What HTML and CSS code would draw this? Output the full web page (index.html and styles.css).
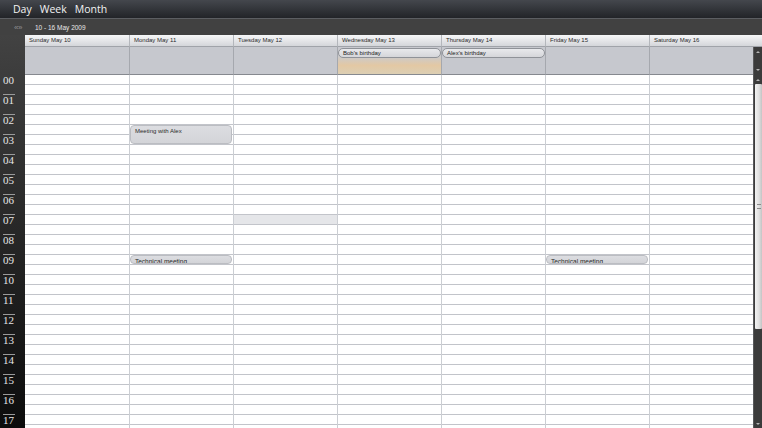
FILE: index.html
```html
<!DOCTYPE html>
<html>
<head>
<meta charset="utf-8">
<title>Week view</title>
<link rel="stylesheet" href="styles.css">
</head>
<body>
<div class="app">
  <div class="topbar"><span>Day</span><span>Week</span><span>Month</span></div>
  <div class="subbar"><span class="nav">«»</span><span class="range">10 - 16 May 2009</span></div>
  <div class="main">
    <div class="times">
      <div class="times-head"></div>
      <div class="hour first">00</div>
      <div class="hour">01</div>
      <div class="hour">02</div>
      <div class="hour">03</div>
      <div class="hour">04</div>
      <div class="hour">05</div>
      <div class="hour">06</div>
      <div class="hour">07</div>
      <div class="hour">08</div>
      <div class="hour">09</div>
      <div class="hour">10</div>
      <div class="hour">11</div>
      <div class="hour">12</div>
      <div class="hour">13</div>
      <div class="hour">14</div>
      <div class="hour">15</div>
      <div class="hour">16</div>
      <div class="hour last">17</div>
    </div>
    <div class="days">
      <div class="day">
        <div class="day-name">Sunday May 10</div>
        <div class="allday"></div>
        <div class="slots"></div>
      </div>
      <div class="day">
        <div class="day-name">Monday May 11</div>
        <div class="allday"></div>
        <div class="slots">
          <div class="event ev-meeting">Meeting with Alex</div>
          <div class="event ev-tech">Technical meeting</div>
        </div>
      </div>
      <div class="day">
        <div class="day-name">Tuesday May 12</div>
        <div class="allday"></div>
        <div class="slots">
          <div class="hl"></div>
        </div>
      </div>
      <div class="day">
        <div class="day-name">Wednesday May 13</div>
        <div class="allday today"><div class="pill">Bob's birthday</div></div>
        <div class="slots"></div>
      </div>
      <div class="day">
        <div class="day-name">Thursday May 14</div>
        <div class="allday"><div class="pill">Alex's birthday</div></div>
        <div class="slots"></div>
      </div>
      <div class="day">
        <div class="day-name">Friday May 15</div>
        <div class="allday"></div>
        <div class="slots">
          <div class="event ev-tech">Technical meeting</div>
        </div>
      </div>
      <div class="day">
        <div class="day-name">Saturday May 16</div>
        <div class="allday"></div>
        <div class="slots"></div>
      </div>
    </div>
    <div class="scroll">
      <div class="scroll-cap"></div>
      <div class="track">
        <div class="sb-allday">
          <span class="arr up"></span>
          <span class="arr down"></span>
        </div>
        <div class="sb-body">
          <span class="arr up sb-up"></span>
          <div class="thumb"></div>
          <span class="arr down sb-down"></span>
        </div>
      </div>
    </div>
  </div>
</div>
</body>
</html>
```
FILE: styles.css
```css
* { box-sizing: border-box; margin: 0; padding: 0; }

body {
  width: 762px;
  height: 428px;
  overflow: hidden;
  background: #404040;
  font-family: "Liberation Sans", Arial, sans-serif;
}

.app {
  display: flex;
  flex-direction: column;
  height: 428px;
}

.topbar {
  height: 19px;
  flex-shrink: 0;
  display: flex;
  gap: 8px;
  align-items: center;
  padding-left: 13px;
  background: linear-gradient(#44474d, #222428);
  border-bottom: 1px solid #5c5e62;
  font-family: "Open Sans", sans-serif;
  font-size: 10.5px;
  color: #f2f2f2;
}

.subbar {
  height: 16px;
  flex-shrink: 0;
  display: flex;
  align-items: center;
  background: #414141;
  font-size: 6.5px;
  color: #e8e8e8;
}

.nav {
  color: #8f8f8f;
  margin-left: 14px;
  width: 21px;
  font-size: 8px;
  letter-spacing: -0.5px;
}

.main {
  flex: 1;
  display: flex;
  min-height: 0;
  overflow: hidden;
}

.times {
  width: 25px;
  flex-shrink: 0;
  display: flex;
  flex-direction: column;
  overflow: hidden;
  background: linear-gradient(#424242, #0c0c0c);
}

.times-head { height: 39px; flex-shrink: 0; }

.hour {
  height: 20px;
  flex-shrink: 0;
  padding-left: 3px;
  font-family: "Liberation Serif", serif;
  font-size: 11px;
  line-height: 12px;
  color: #e6e6e6;
}

.hour.last { height: 13px; }

.hour::before {
  content: "";
  display: block;
  width: 12px;
  height: 1px;
  margin-bottom: -1px;
  background: #9a9a9a;
}

.hour.first::before { background: transparent; }

.days {
  display: flex;
  flex-shrink: 0;
}

.day {
  width: 104px;
  flex-shrink: 0;
  display: flex;
  flex-direction: column;
}

.day-name {
  height: 12px;
  flex-shrink: 0;
  padding-left: 4px;
  border-bottom: 1px solid #a0a3a9;
  background: linear-gradient(#f6f7f8, #e2e3e6 60%, #d4d6da);
  font-size: 6px;
  line-height: 11px;
  color: #2a2a2a;
  white-space: nowrap;
}

.allday {
  height: 28px;
  flex-shrink: 0;
  padding-top: 1px;
  border-bottom: 1px solid #86898f;
  background: #c6c8ce;
}

.allday.today {
  background: linear-gradient(#c8c9cf 0%, #cbcacb 35%, #e3c8a4 68%, #dccfb4 100%);
}

.slots {
  flex: 1;
  display: grid;
  grid-template-rows: repeat(36, 10px);
  background: repeating-linear-gradient(to bottom, #ffffff 0 9px, #c2c4ca 9px 10px);
}

.day + .day .day-name { border-left: 1px solid #b4b7bc; }
.day + .day .allday { border-left: 1px solid #a5a8ae; }
.day + .day .slots { border-left: 1px solid #cbced3; }

.pill {
  height: 10px;
  padding-left: 4px;
  border: 1px solid #8f9298;
  border-radius: 5px;
  background: linear-gradient(#e8e9ec, #d5d6da);
  font-size: 6px;
  line-height: 8px;
  color: #222;
  white-space: nowrap;
}

.event {
  margin-right: 1px;
  padding-left: 4px;
  padding-top: 2px;
  border: 1px solid #bbbdc2;
  border-radius: 4px;
  background: linear-gradient(#dcdde1, #d3d4d8);
  font-size: 6px;
  line-height: 7px;
  color: #2a2a2a;
  overflow: hidden;
  white-space: nowrap;
  align-self: start;
}

.ev-meeting { grid-row: 6 / span 2; height: 19px; }
.ev-tech { grid-row: 19; height: 9px; padding-top: 2px; font-size: 6.5px; }

.hl {
  grid-row: 15;
  height: 9px;
  background: #e5e6e9;
}

.scroll {
  width: 9px;
  flex-shrink: 0;
  display: flex;
  flex-direction: column;
}

.scroll-cap {
  height: 12px;
  flex-shrink: 0;
  border-bottom: 1px solid #a0a3a9;
  background: linear-gradient(#f6f7f8, #e2e3e6 60%, #d4d6da);
}

.track {
  flex: 1;
  display: flex;
  flex-direction: column;
  border-left: 1px solid #58595b;
  background: #3b3b3b;
}

.sb-allday {
  height: 28px;
  flex-shrink: 0;
  display: flex;
  flex-direction: column;
  justify-content: space-between;
  align-items: center;
  padding: 4px 0 4px;
}

.sb-body {
  flex: 1;
  display: flex;
  flex-direction: column;
  align-items: center;
}

.arr {
  width: 0;
  height: 0;
  border-left: 2px solid transparent;
  border-right: 2px solid transparent;
}

.arr.up { border-bottom: 2px solid #b5b5b5; }
.arr.down { border-top: 2px solid #b5b5b5; }

.sb-up { margin-top: 4px; }

.thumb {
  align-self: stretch;
  margin: 3px 0 0 1px;
  height: 245px;
  border-radius: 1px;
  background: linear-gradient(to right, #f2f2f2, #e0e0e0 55%, #c4c4c4);
  display: flex;
  align-items: center;
  justify-content: center;
}

.thumb::after {
  content: "";
  width: 4px;
  height: 3px;
  border-top: 1px solid #8a8a8a;
  border-bottom: 1px solid #8a8a8a;
}

.sb-down { margin-top: auto; margin-bottom: 3px; }
```
